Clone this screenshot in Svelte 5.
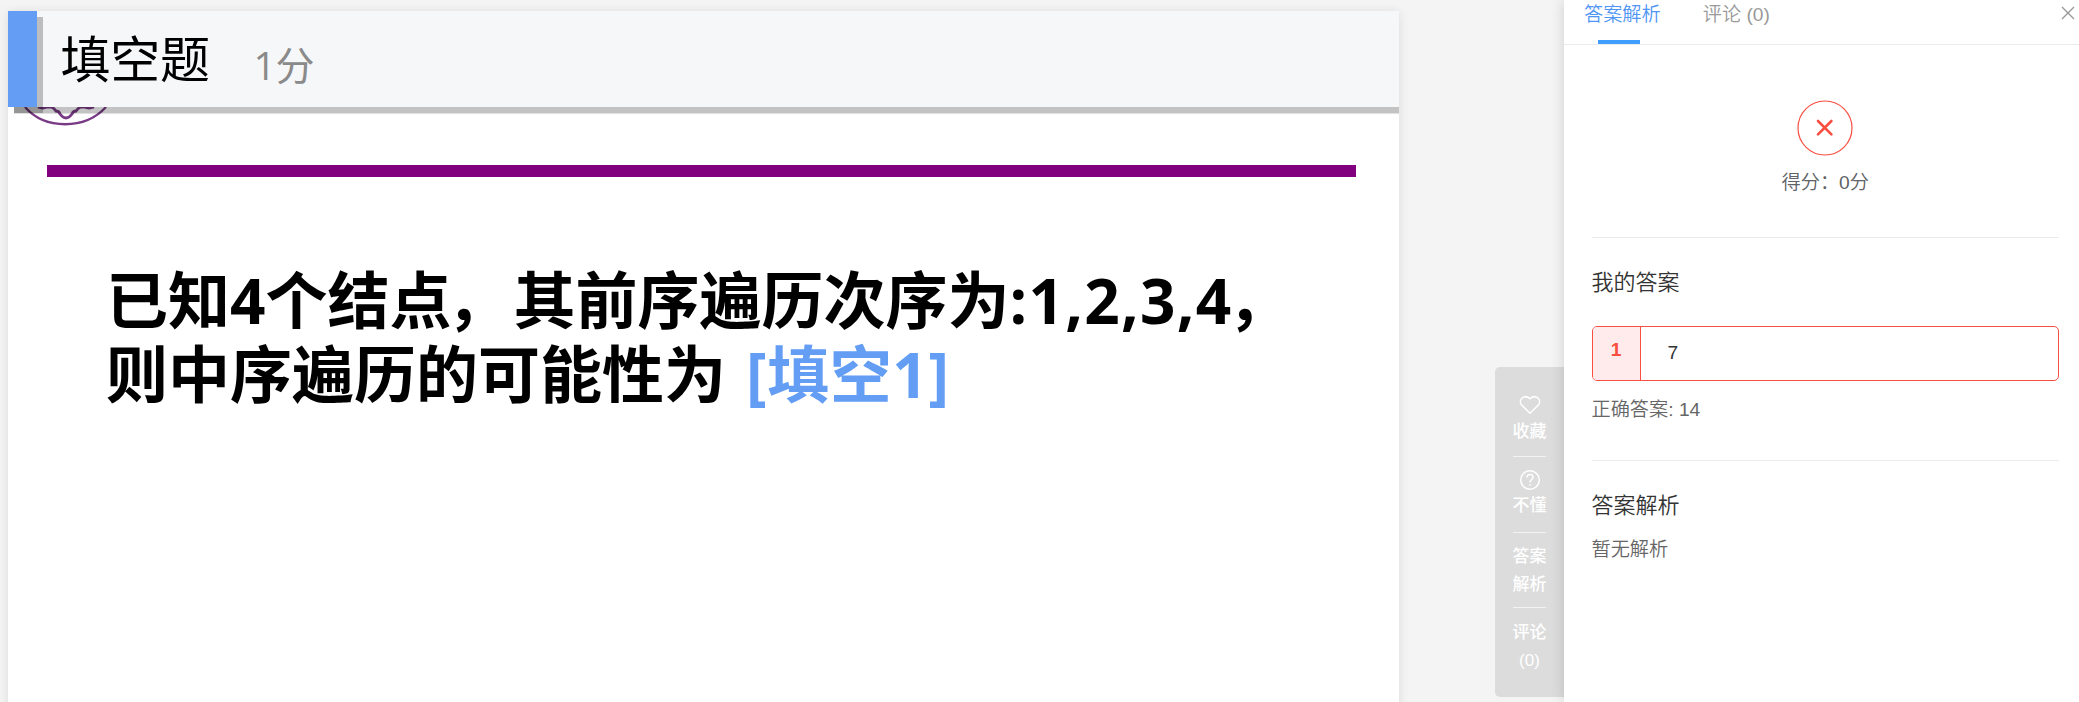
<script>
  const tools = [
    { icon: 'heart', lines: ['收藏'] },
    { icon: 'help', lines: ['不懂'] },
    { icon: null, lines: ['答案', '解析'] },
    { icon: null, lines: ['评论', '(0)'] }
  ];
</script>

<div class="page">
  <main class="stage">
    <section class="slide">
      <svg class="crest" width="100" height="24" viewBox="0 0 100 24" fill="none" stroke="#793b85">
        <path d="M11 0C31 23 71 23 92 0" stroke-width="2.3" />
        <path d="M24 0q5 2 9 0l4 0q3 1 5 4q3 0 4 3q6 8 12 0q1-3 4-3q2-3 5-4h3q5 2 10 0" stroke-width="2.8" />
      </svg>
      <header class="type">
        <span class="mark"></span>
        <h1>填空题</h1>
        <span class="points">1分</span>
      </header>
      <div class="rule"></div>
      <p class="question">
        <span class="row">已知4个结点<span class="comma">，</span>其前序遍历次序为<span class="nums">:1,2,3,4</span><span class="comma">，</span></span>
        <span class="row">则中序遍历的可能性为<span class="blank">[填空1]</span></span>
      </p>
    </section>
    <nav class="tools">
      {#each tools as tool}
        <div class="tool">
          {#if tool.icon === 'heart'}
            <svg width="22" height="20" viewBox="0 0 22 20"><path d="M11 18.3L2.4 9.8C-1.2 4.9 5.4-1.5 11 3.8C16.6-1.5 23.2 4.9 19.6 9.8Z" /></svg>
          {:else if tool.icon === 'help'}
            <svg width="22" height="22" viewBox="0 0 22 22"><circle cx="11" cy="11" r="9.3" /><path d="M8 8.6c0-4 6-4 6-.4c0 2.2-3 2.4-3 5.2M11 15.2v1.6" /></svg>
          {/if}
          {#each tool.lines as line}<span>{line}</span>{/each}
        </div>
      {/each}
    </nav>
  </main>

  <aside class="panel">
    <div class="tabs">
      <span class="tab active">答案解析</span>
      <span class="tab">评论 (0)</span>
      <svg class="close" width="14" height="14" viewBox="0 0 14 14"><path d="M1 1l12 12M13 1L1 13" /></svg>
    </div>
    <div class="body">
      <div class="score">
        <svg width="56" height="56" viewBox="0 0 56 56" fill="none" stroke="#f84f41">
          <circle cx="28" cy="28" r="27" stroke-width="1.2" />
          <path d="M21 21l13.4 13.4M34.4 21L21 34.4" stroke-width="2.6" stroke-linecap="round" />
        </svg>
        <span>得分：0分</span>
      </div>
      <div class="mine">
        <h2>我的答案</h2>
        <div class="answer"><b>1</b><span>7</span></div>
        <p>正确答案: 14</p>
      </div>
      <div class="analysis">
        <h2>答案解析</h2>
        <p>暂无解析</p>
      </div>
    </div>
  </aside>
</div>

<style>
  :global(body) { margin: 0; overflow: hidden; }
  .page {
    display: flex; width: 2079px; height: 702px; overflow: hidden; background: #f4f4f4;
    font-family: "Liberation Sans", "Noto Sans CJK SC", sans-serif; font-weight: 350;
  }
  h1, h2, p { margin: 0; font-weight: inherit; }
  .stage { display: flex; justify-content: space-between; width: 1564px; box-sizing: border-box; padding: 11px 0 0 8px; }
  .slide { position: relative; width: 1391px; height: 720px; background: #fff; box-shadow: 0 1px 10px rgba(0,0,0,.1); }
  .crest { position: absolute; left: 6px; top: 96px; }
  .type {
    position: relative; display: flex; align-items: flex-start; height: 96px; background: #f5f7f9;
    box-sizing: border-box; clip-path: inset(0 0 -8px 0); box-shadow: 6px 6.5px 0 rgba(0,0,0,.235);
  }
  .mark { width: 29px; height: 96px; background: #639ef4; box-shadow: 6px 6px 0 rgba(0,0,0,.235); }
  h1 { margin-left: 23.5px; font: 400 50px/72px "Noto Sans CJK SC", sans-serif; color: #000; padding-top: 9px; letter-spacing: -.3px; }
  .points { margin-left: 44px; padding-top: 26px; font: 400 39px/56px "Open Sans", "Noto Sans CJK SC", sans-serif; letter-spacing: -.5px; color: #8a8a8a; }
  .rule { width: 1309px; height: 12px; margin: 58px 0 0 38.5px; background: #800080; }
  .question { margin: 86px 0 0 98px; font: 700 62px/74px "Open Sans", "Noto Sans CJK SC", sans-serif; color: #000; }
  .row { display: block; white-space: nowrap; }
  .nums { letter-spacing: 1.3px; }
  .comma { margin-left: -5px; margin-right: 5px; }
  .blank { color: #639ef4; margin-left: 20px; letter-spacing: .6px; }
  .tools {
    display: flex; flex-direction: column; width: 69px; height: 330px; margin-top: 356px; box-sizing: border-box;
    padding: 14px 18px 0; border-radius: 5px 0 0 5px; background: #dcdcdc; color: #fff;
  }
  .tool { display: flex; flex-direction: column; align-items: center; height: 75.5px; box-sizing: border-box; font-size: 17px; font-weight: 500; line-height: 28px; padding-top: 10px; }
  .tool + .tool { border-top: 1.5px solid #f3f3f3; }
  .tool:first-child { padding-top: 14px; height: 75px; }
  .tool:last-child { padding-top: 11px; }
  .tool svg { flex: none; fill: none; stroke: #fff; stroke-width: 1.5; margin-bottom: 3px; }
  .tool:nth-child(2) { padding-top: 12px; }
  .tool:nth-child(2) svg { margin-bottom: 1px; }
  .tool span { white-space: nowrap; }
  .panel { position: relative; width: 515px; height: 702px; background: #fff; box-shadow: 0 0 13px rgba(0,0,0,.15); }
  .tabs { display: flex; height: 44px; border-bottom: 1px solid #ebebeb; padding-left: 20px; gap: 42px; font-size: 19.2px; line-height: 29px; color: #999; }
  .tab { position: relative; white-space: nowrap; }
  .active { color: #5096f5; }
  .active::after { content: ""; position: absolute; left: 14px; top: 40px; width: 42px; height: 4px; background: #409eff; }
  .close { margin: 6px 4px 0 auto; fill: none; stroke: #999; stroke-width: 1.4; }
  .body { padding: 0 20px 0 27.5px; }
  .score { display: flex; flex-direction: column; align-items: center; height: 193px; box-sizing: border-box; padding-top: 54.5px; border-bottom: 1px solid #ebebeb; font-size: 19.2px; line-height: 28px; color: #606266; }
  .score svg { margin-bottom: 13px; }
  .mine { height: 222px; border-bottom: 1px solid #ebebeb; box-sizing: content-box; }
  h2 { font-size: 22px; line-height: 32px; color: #333; padding-top: 29px; }
  .answer { display: flex; margin-top: 27px; height: 55px; box-sizing: border-box; border: 1px solid #f84f41; border-radius: 5px; overflow: hidden; font-size: 19.2px; color: #333; }
  .answer b { width: 47px; font-weight: 700; border-right: 1px solid #f84f41; background: #ffebeb; color: #f84f41; text-align: center; line-height: 46px; }
  .answer span { margin-left: 27px; line-height: 52px; }
  .mine p { margin-top: 15px; font-size: 19.2px; line-height: 28px; color: #666; }
  .analysis p { margin-top: 14px; font-size: 19.2px; line-height: 28px; color: #666; }
</style>
